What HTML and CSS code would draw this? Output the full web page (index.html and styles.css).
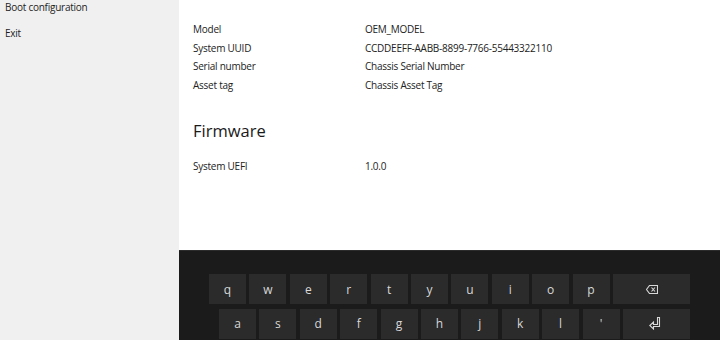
FILE: index.html
```html
<!DOCTYPE html>
<html lang="en">
<head>
    <meta charset="UTF-8">
    <meta name="viewport" content="width=device-width, initial-scale=1.0">
    <title>Device information</title>
    <link rel="stylesheet" href="styles.css">
</head>
<body>

    <!-- left navigation -->
    <ul class="nav">
        <li class="nav-item">Boot configuration</li>
        <li class="nav-item">Exit</li>
    </ul>

    <div class="main">
        <div class="content">
            <div class="info-row"><span class="label">Model</span><span class="value">OEM_MODEL</span></div>
            <div class="info-row"><span class="label">System UUID</span><span class="value">CCDDEEFF-AABB-8899-7766-55443322110</span></div>
            <div class="info-row"><span class="label">Serial number</span><span class="value">Chassis Serial Number</span></div>
            <div class="info-row"><span class="label">Asset tag</span><span class="value">Chassis Asset Tag</span></div>

            <h2 class="section-title">Firmware</h2>
            <div class="info-row"><span class="label">System UEFI</span><span class="value">1.0.0</span></div>
        </div>

        <!-- touch keyboard -->
        <div class="keyboard">
            <div class="key-row">
                <div class="key">q</div>
                <div class="key">w</div>
                <div class="key">e</div>
                <div class="key">r</div>
                <div class="key">t</div>
                <div class="key">y</div>
                <div class="key">u</div>
                <div class="key">i</div>
                <div class="key">o</div>
                <div class="key">p</div>
                <div class="key key-back">
                    <svg width="12" height="9" viewBox="0 0 12 9">
                        <path d="M3.5 0.5 H11.5 V8.5 H3.5 L0.5 4.5 Z" fill="none" stroke="#d8d8d8" stroke-width="1.1"/>
                        <path d="M5.5 2.5 L9 6.5 M9 2.5 L5.5 6.5" stroke="#d8d8d8" stroke-width="1.1"/>
                    </svg>
                </div>
            </div>
            <div class="key-row key-row-2">
                <div class="key">a</div>
                <div class="key">s</div>
                <div class="key">d</div>
                <div class="key">f</div>
                <div class="key">g</div>
                <div class="key">h</div>
                <div class="key">j</div>
                <div class="key">k</div>
                <div class="key">l</div>
                <div class="key">'</div>
                <div class="key key-enter">
                    <svg width="14" height="13" viewBox="0 0 14 13">
                        <path d="M8.5 0.5 V7.5 H4.5 V5 L0.8 8.5 L4.5 12 V9.5 H10.5 V0.5 Z" fill="none" stroke="#d8d8d8" stroke-width="1.1" stroke-linejoin="miter"/>
                    </svg>
                </div>
            </div>
        </div>
    </div>

</body>
</html>
```

FILE: styles.css
```css
html, body {
    height: 100%;
}
body {
    font-family: "Open Sans", "Noto Sans", sans-serif;
    margin: 0;
    padding: 0;
    display: flex;
    overflow: hidden;
    background-color: #fff;
    color: #222;
}
.nav {
    width: 179px;
    flex-shrink: 0;
    margin: 0;
    padding: 0;
    list-style-type: none;
    background-color: #f0f0f0;
}
.nav-item {
    height: 26px;
    line-height: 26px;
    padding-left: 5px;
    font-size: 10px;
    letter-spacing: -0.25px;
    color: #1e1e1e;
}
.nav-item:first-child {
    margin-top: -6px;
}
.main {
    flex: 1;
    display: flex;
    flex-direction: column;
}
.content {
    height: 250px;
    box-sizing: border-box;
    padding: 20px 0 0 14px;
}
.info-row {
    display: flex;
    height: 18.5px;
    line-height: 18.5px;
    font-size: 10px;
    letter-spacing: -0.25px;
}
.label {
    width: 172px;
}
.section-title {
    margin: 25px 0 13.5px;
    font-size: 16.5px;
    font-weight: normal;
    line-height: 24px;
    color: #1a1a1a;
}
.keyboard {
    flex: 1;
    background-color: #1b1b1b;
    border-top: 1px solid #2c2c2c;
    padding-top: 23px;
    overflow: hidden;
}
.key-row {
    display: flex;
    gap: 3.4px;
    padding-left: 30px;
    margin-bottom: 4.7px;
}
.key-row-2 {
    padding-left: 40px;
}
.key {
    width: 37px;
    height: 30px;
    flex-shrink: 0;
    background-color: #2b2b2b;
    color: #d8d8d8;
    font-size: 12px;
    display: flex;
    align-items: center;
    justify-content: center;
}
.key-back {
    width: 77.3px;
}
.key-enter {
    width: 67px;
}
```
